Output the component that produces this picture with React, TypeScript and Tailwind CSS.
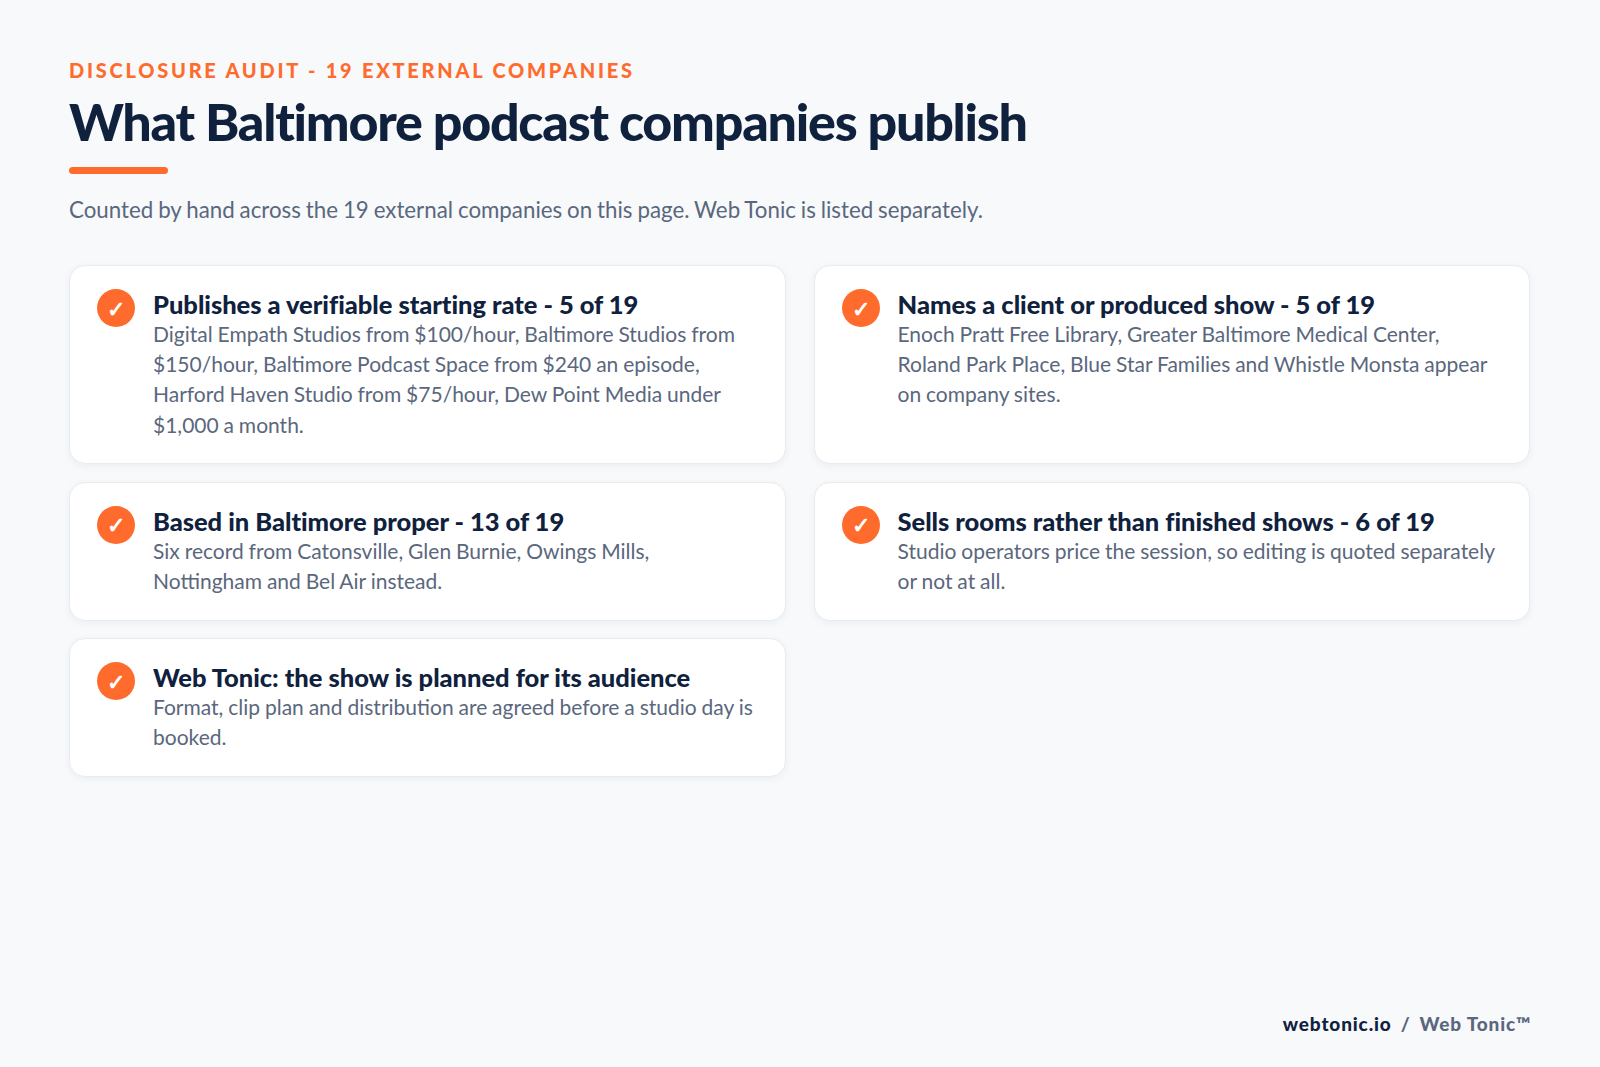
const CARDS = [
  {
    title: 'Publishes a verifiable starting rate - 5 of 19',
    body: 'Digital Empath Studios from $100/hour, Baltimore Studios from $150/hour, Baltimore Podcast Space from $240 an episode, Harford Haven Studio from $75/hour, Dew Point Media under $1,000 a month.',
  },
  {
    title: 'Names a client or produced show - 5 of 19',
    body: 'Enoch Pratt Free Library, Greater Baltimore Medical Center, Roland Park Place, Blue Star Families and Whistle Monsta appear on company sites.',
  },
  {
    title: 'Based in Baltimore proper - 13 of 19',
    body: 'Six record from Catonsville, Glen Burnie, Owings Mills, Nottingham and Bel Air instead.',
  },
  {
    title: 'Sells rooms rather than finished shows - 6 of 19',
    body: 'Studio operators price the session, so editing is quoted separately or not at all.',
  },
  {
    title: 'Web Tonic: the show is planned for its audience',
    body: 'Format, clip plan and distribution are agreed before a studio day is booked.',
  },
]

function Card({ title, body }: { title: string; body: string }) {
  return (
    <div className="flex gap-[18px] rounded-[16px] border border-[#e8ebf0] bg-white pt-[23px] pr-[26px] pb-[23.5px] pl-[27px] shadow-[0_2px_8px_rgba(15,32,60,0.05)]">
      <div className="flex h-[38px] w-[38px] shrink-0 items-center justify-center rounded-full bg-[#ff6b2c] text-[22px] font-black text-white">
        ✓
      </div>
      <div className="min-w-0">
        <h3 className="text-[25.5px] leading-[30px] font-black tracking-[-0.03px] text-[#0f213d]">{title}</h3>
        <p className="text-[21px] leading-[30.2px] [word-spacing:-0.5px] text-[#5a677d]">{body}</p>
      </div>
    </div>
  )
}

export default function App() {
  return (
    <div className="flex h-[1067px] w-[1600px] flex-col bg-[#f7f9fb] pt-[58px] pr-[70px] pl-[69px] font-['Lato',sans-serif]">
      <div className="text-[20px] leading-[24px] font-black tracking-[2.75px] text-[#ff6b2c]">
        DISCLOSURE AUDIT - 19 EXTERNAL COMPANIES
      </div>
      <h1 className="mt-[8px] text-[52px] leading-[62px] font-black tracking-[-1.25px] text-[#0f213d]">
        What Baltimore podcast companies publish
      </h1>
      <div className="mt-[15px] h-[7px] w-[99px] rounded-full bg-[#ff6b2c]" />
      <p className="mt-[20px] text-[22.3px] leading-[32px] [word-spacing:-0.8px] text-[#5a677d]">
        Counted by hand across the 19 external companies on this page. Web Tonic is listed separately.
      </p>
      <div className="mt-[39px] grid grid-cols-2 gap-x-[28px] gap-y-[17.5px]">
        {CARDS.map((c) => (
          <Card key={c.title} title={c.title} body={c.body} />
        ))}
      </div>
      <div className="mt-auto mr-[-1px] mb-[31px] flex justify-end gap-[9px] text-[19px] leading-[24px] font-black tracking-[0.85px]">
        <span className="text-[#0f213d]">webtonic.io</span>
        <span className="text-[#5a677d]">/</span>
        <span className="text-[#5a677d]">Web Tonic™</span>
      </div>
    </div>
  )
}
